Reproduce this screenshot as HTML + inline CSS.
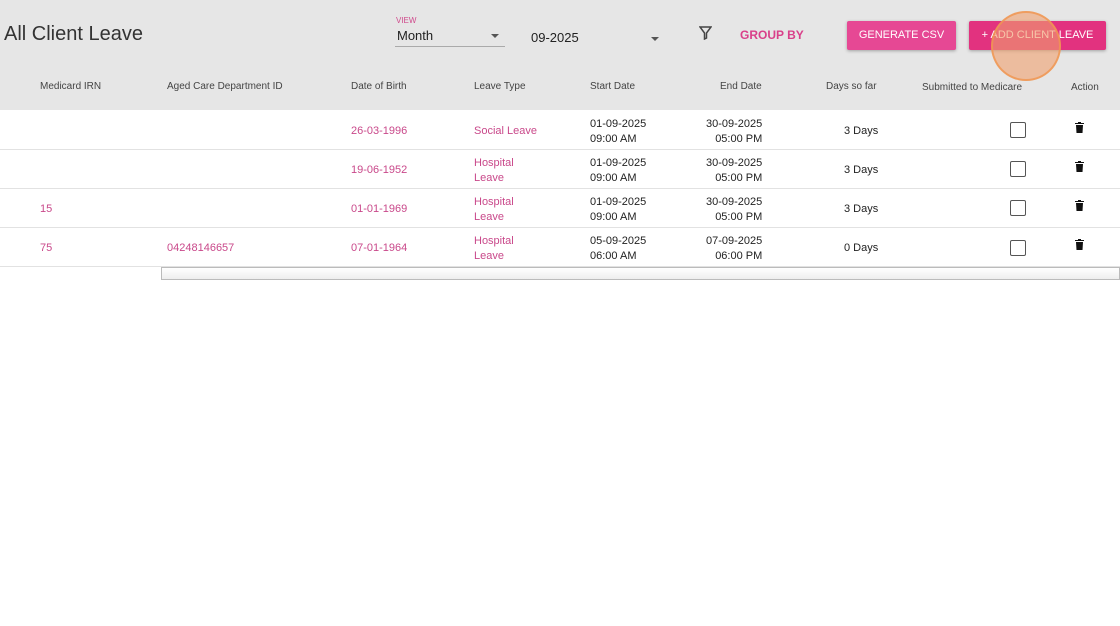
<!DOCTYPE html>
<html><head><style>
body{margin:0;width:1120px;height:626px;background:#fff;font-family:"Liberation Sans",sans-serif;position:relative;overflow:hidden}
.a{position:absolute;white-space:nowrap}
.hdr{position:absolute;left:0;top:0;width:1120px;height:110px;background:#e6e6e6}
.th{font-size:10px;color:#444;top:81px}
.pk{color:#c9488a;font-size:11px}
.bk{color:#222;font-size:11px}
.row{position:absolute;left:0;width:1120px;height:1px;background:#e2e2e2}
.cb{position:absolute;width:14px;height:14px;border:1px solid #555;border-radius:2px;background:#fff;left:1010px}
.bin{position:absolute;left:1075px;width:9px;height:11px}
.btn{position:absolute;top:21px;height:29px;color:#fff;font-size:11px;line-height:29px;text-align:center;box-shadow:0 1px 3px rgba(0,0,0,.3);border-radius:2px}
</style></head><body>
<div class="hdr"></div>
<div class="a" style="left:4px;top:23px;font-size:20px;color:#333">All Client Leave</div>
<div class="a" style="left:396px;top:16px;font-size:8px;color:#d04a8c">VIEW</div>
<div class="a" style="left:397px;top:28px;font-size:13px;color:#222">Month</div>
<div class="a" style="left:395px;top:46px;width:110px;height:1px;background:#aaa"></div>
<div class="a" style="left:491px;top:34px;border:4px solid transparent;border-top:4px solid #555"></div>
<div class="a" style="left:531px;top:30px;font-size:13px;color:#222">09-2025</div>
<div class="a" style="left:651px;top:37px;border:4px solid transparent;border-top:4px solid #555"></div>
<svg class="a" style="left:699px;top:26px" width="13" height="14" viewBox="0 0 13 14"><path d="M1 1h11L7.5 7v5L5.5 13V7z" fill="none" stroke="#444" stroke-width="1.5"/></svg>
<div class="a" style="left:740px;top:28px;font-size:12px;color:#d9408a;font-weight:bold">GROUP BY</div>
<div class="btn" style="left:847px;width:109px;background:#e64894">GENERATE CSV</div>
<div class="btn" style="left:969px;width:137px;background:#e2327f">+ ADD CLIENT LEAVE</div>
<div class="a" style="left:991px;top:11px;width:66px;height:66px;border-radius:50%;background:rgba(240,160,110,.6);border:2px solid rgba(240,150,80,.8)"></div>
<div class="a th" style="left:40px">Medicard IRN</div>
<div class="a th" style="left:167px">Aged Care Department ID</div>
<div class="a th" style="left:351px">Date of Birth</div>
<div class="a th" style="left:474px">Leave Type</div>
<div class="a th" style="left:590px">Start Date</div>
<div class="a th" style="left:720px">End Date</div>
<div class="a th" style="left:826px">Days so far</div>
<div class="a th" style="left:922px;top:82px">Submitted to Medicare</div>
<div class="a th" style="left:1071px;top:82px">Action</div>

<div class="row" style="top:149px"></div><div class="row" style="top:188px"></div><div class="row" style="top:227px"></div><div class="row" style="top:266px"></div>

<div class="a pk" style="left:351px;top:125px">26-03-1996</div>
<div class="a pk" style="left:474px;top:125px">Social Leave</div>
<div class="a bk" style="left:590px;top:117px;line-height:15px">01-09-2025<br>09:00 AM</div>
<div class="a bk" style="left:706px;top:117px;line-height:15px;text-align:right">30-09-2025<br>05:00 PM</div>
<div class="a bk" style="left:844px;top:125px">3 Days</div>
<div class="cb" style="top:122px"></div>

<div class="a pk" style="left:351px;top:164px">19-06-1952</div>
<div class="a pk" style="left:474px;top:156px;line-height:15px">Hospital<br>Leave</div>
<div class="a bk" style="left:590px;top:156px;line-height:15px">01-09-2025<br>09:00 AM</div>
<div class="a bk" style="left:706px;top:156px;line-height:15px;text-align:right">30-09-2025<br>05:00 PM</div>
<div class="a bk" style="left:844px;top:164px">3 Days</div>
<div class="cb" style="top:161px"></div>

<div class="a pk" style="left:40px;top:203px">15</div>
<div class="a pk" style="left:351px;top:203px">01-01-1969</div>
<div class="a pk" style="left:474px;top:195px;line-height:15px">Hospital<br>Leave</div>
<div class="a bk" style="left:590px;top:195px;line-height:15px">01-09-2025<br>09:00 AM</div>
<div class="a bk" style="left:706px;top:195px;line-height:15px;text-align:right">30-09-2025<br>05:00 PM</div>
<div class="a bk" style="left:844px;top:203px">3 Days</div>
<div class="cb" style="top:200px"></div>

<div class="a pk" style="left:40px;top:242px">75</div>
<div class="a pk" style="left:167px;top:242px">04248146657</div>
<div class="a pk" style="left:351px;top:242px">07-01-1964</div>
<div class="a pk" style="left:474px;top:234px;line-height:15px">Hospital<br>Leave</div>
<div class="a bk" style="left:590px;top:234px;line-height:15px">05-09-2025<br>06:00 AM</div>
<div class="a bk" style="left:706px;top:234px;line-height:15px;text-align:right">07-09-2025<br>06:00 PM</div>
<div class="a bk" style="left:844px;top:242px">0 Days</div>
<div class="cb" style="top:240px"></div>

<svg class="bin" style="top:122px" viewBox="0 0 9 11"><path d="M0 1h9v1H0zM3 0h3v1H3zM1 3h7l-.5 8h-6z" fill="#111"/></svg>
<svg class="bin" style="top:161px" viewBox="0 0 9 11"><path d="M0 1h9v1H0zM3 0h3v1H3zM1 3h7l-.5 8h-6z" fill="#111"/></svg>
<svg class="bin" style="top:200px" viewBox="0 0 9 11"><path d="M0 1h9v1H0zM3 0h3v1H3zM1 3h7l-.5 8h-6z" fill="#111"/></svg>
<svg class="bin" style="top:239px" viewBox="0 0 9 11"><path d="M0 1h9v1H0zM3 0h3v1H3zM1 3h7l-.5 8h-6z" fill="#111"/></svg>

<div class="a" style="left:161px;top:267px;width:957px;height:11px;border:1px solid #bbb;background:linear-gradient(#fff,#eee)"></div>
</body></html>
